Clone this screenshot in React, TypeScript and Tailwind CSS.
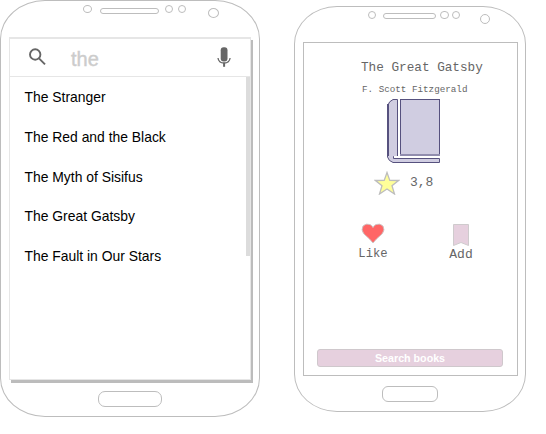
import React from "react";

const titles = [
  "The Stranger",
  "The Red and the Black",
  "The Myth of Sisifus",
  "The Great Gatsby",
  "The Fault in Our Stars",
];

function SearchIcon() {
  return (
    <svg className="mt-[9px] ml-[19px] h-[18px] w-[18px] shrink-0" viewBox="0 0 18 18" fill="none" stroke="#666">
      <circle cx="6.2" cy="6.5" r="5.2" strokeWidth="1.9" />
      <path d="M10 10.4 16 16.4" strokeWidth="2" />
    </svg>
  );
}

function MicIcon() {
  return (
    <svg className="mt-[8px] h-5 w-[14px] shrink-0" viewBox="0 0 14 20">
      <rect x="3.7" y="0.3" width="6.8" height="14.2" rx="3" fill="#666" />
      <path d="M1 11c.4 3.2 2.8 5 6.1 5s5.6-1.8 6-5" fill="none" stroke="#666" strokeWidth="1.3" />
      <path d="M7.1 15.8v4" stroke="#666" strokeWidth="2" />
    </svg>
  );
}

function BookIcon() {
  return (
    <svg className="mt-[3px] ml-[83px] h-[65px] w-[55px] shrink-0" viewBox="0 0 55 65">
      <path d="M6 .5H10.5V57H7V59.5H52.5V63.5H6Q1 61.5 .5 57V8Q1.5 2 6 .5Z" fill="#d0cde1" />
      <path d="M52.5 63.5H6Q1.5 62 .5 58V7Q2 2 6 .5H10.5V57.5H6.5V59.5H52.5V63.5" fill="none" stroke="#56517e" />
      <path d="M1 5V57" stroke="#56517e" strokeWidth="2" />
      <rect x="13.5" y=".5" width="39" height="56" fill="#d0cde1" stroke="#56517e" />
      <path d="M13 56H53" stroke="#918dae" strokeWidth="2" />
      <path d="M7 58H53" stroke="#fff" strokeWidth="2" />
      <path d="M12 1V57" stroke="#fff" strokeWidth="1.6" />
    </svg>
  );
}

function SearchPhone() {
  return (
    <div className="flex h-[417px] w-[260px] shrink-0 flex-col rounded-[45px/39px] border border-[#bdbdbd]">
      <div className="flex h-[36px] shrink-0 items-start">
        <i className="mt-[4px] ml-[82px] h-[8px] w-[9px] rounded-[50%] border border-[#bdbdbd]" />
        <i className="mt-[7px] ml-[8px] h-[6px] w-[59px] rounded-[3px] border border-[#bdbdbd]" />
        <i className="mt-[4px] ml-[6px] h-[8px] w-[8px] rounded-[50%] border border-[#bdbdbd]" />
        <i className="mt-[4px] ml-[5px] h-[8px] w-[8px] rounded-[50%] border border-[#bdbdbd]" />
        <i className="mt-[7px] ml-[22px] h-[10px] w-[11px] rounded-[50%] border border-[#bdbdbd]" />
      </div>
      <div className="ml-[8px] h-[343px] w-[242px] shrink-0 border border-t-2 border-[#e6e6e6] shadow-[2px_3px_0_#bcbcbc]">
        <div className="flex h-[38px] items-start border-b border-[#e6e6e6]">
          <SearchIcon />
          <span className="mt-[8px] ml-[24px] w-[146px] shrink-0 text-[20px] leading-[24px] text-[#ccc] [-webkit-text-stroke:0.4px_#ccc]">
            the
          </span>
          <MicIcon />
        </div>
        <div className="flex items-start">
          <ul className="w-[236px] pl-[14.5px]">
            {titles.map((title) => (
              <li key={title} className="h-[39.8px] text-[13.9px] leading-[41px] whitespace-nowrap text-black">
                {title}
              </li>
            ))}
          </ul>
          <div className="h-[179px] w-[4px] bg-[#dcdcdc]" />
        </div>
      </div>
      <div className="mt-[11px] ml-[97px] h-[16px] w-[64px] shrink-0 rounded-[7px] border border-[#bdbdbd]" />
    </div>
  );
}

function BookPhone() {
  return (
    <div className="mt-[6px] ml-[34px] flex h-[406px] w-[232px] shrink-0 flex-col rounded-[43px/38px] border border-[#bdbdbd]">
      <div className="flex h-[35px] shrink-0 items-start">
        <i className="mt-[4px] ml-[73px] h-[8px] w-[8px] rounded-full border border-[#bdbdbd]" />
        <i className="mt-[6px] ml-[7px] h-[6px] w-[53px] rounded-[3px] border border-[#bdbdbd]" />
        <i className="mt-[4px] ml-[4px] h-[8px] w-[9px] rounded-full border border-[#bdbdbd]" />
        <i className="mt-[4px] ml-[3px] h-[8px] w-[8px] rounded-full border border-[#bdbdbd]" />
        <i className="mt-[7px] ml-[20px] h-[10px] w-[10px] rounded-full border border-[#bdbdbd]" />
      </div>
      <div className="ml-[8px] flex h-[334px] w-[215px] shrink-0 flex-col border border-[#bdbdbd] font-['Liberation_Mono','Courier_New',monospace] text-[#666]">
        <h1 className="mt-[17px] ml-[57px] text-[12.7px] leading-[16px] whitespace-nowrap">The Great Gatsby</h1>
        <h2 className="mt-[8px] ml-[58px] h-[12px] text-[9.25px] leading-[12px] whitespace-nowrap">F. Scott Fitzgerald</h2>
        <BookIcon />
        <div className="mt-[7px] ml-[70px] flex h-[24px] shrink-0 items-start">
          <svg className="h-6 w-[26px]" viewBox="0 0 26 24">
            <path d="M13 1.5 15.8 9.4 24.5 9.5 18 14.7 20.5 23 13 18 5.5 23 8 14.7 1.5 9.5 10.2 9.4Z" fill="#ffff99" stroke="#bdbdbd" strokeWidth="1.3" />
          </svg>
          <span className="mt-[4px] ml-[10px] text-[13px] leading-[16px]">3,8</span>
        </div>
        <div className="mt-[28px] ml-[54px] flex h-[38px] shrink-0 items-start">
          <div className="flex w-[30px] flex-col items-center">
            <svg className="h-[21px] w-6 shrink-0" viewBox="0 0 24 21">
              <path d="M12 20 8.5 16 3 11Q-.5 7 2 3Q5 0 9 1.5Q11 2.3 12 4.5Q13 2.3 15 1.5Q19 0 22 3Q24.5 7 21 11L15.5 16Z" fill="#ff6666" stroke="#cacaca" strokeWidth=".9" />
            </svg>
            <span className="mt-[3px] text-[12.2px] leading-[15px]">Like</span>
          </div>
          <div className="ml-[60px] flex w-[26px] flex-col items-center">
            <svg className="mt-px h-[22px] w-4 shrink-0" viewBox="0 0 16 22">
              <path d="M.5 .5H15.5V21.5L8 18.5 .5 21.5Z" fill="#e6d0de" stroke="#cfcbcd" />
            </svg>
            <span className="mt-px text-[13px] leading-[15px]">Add</span>
          </div>
        </div>
        <button className="mt-auto mb-[8px] ml-[13px] h-[18px] w-[186px] shrink-0 rounded-[3px] border border-[#cfc8cc] bg-[#e6d0de] font-['Liberation_Sans',Arial,sans-serif] text-[10.7px] leading-[15px] font-bold text-white">
          Search books
        </button>
      </div>
      <div className="mt-[10px] ml-[87px] h-[16px] w-[56px] shrink-0 rounded-[6px] border border-[#bdbdbd]" />
    </div>
  );
}

export default function App() {
  return (
    <main className="flex h-[434px] w-[546px] items-start overflow-hidden bg-white font-['Liberation_Sans',Arial,sans-serif]">
      <SearchPhone />
      <BookPhone />
    </main>
  );
}
